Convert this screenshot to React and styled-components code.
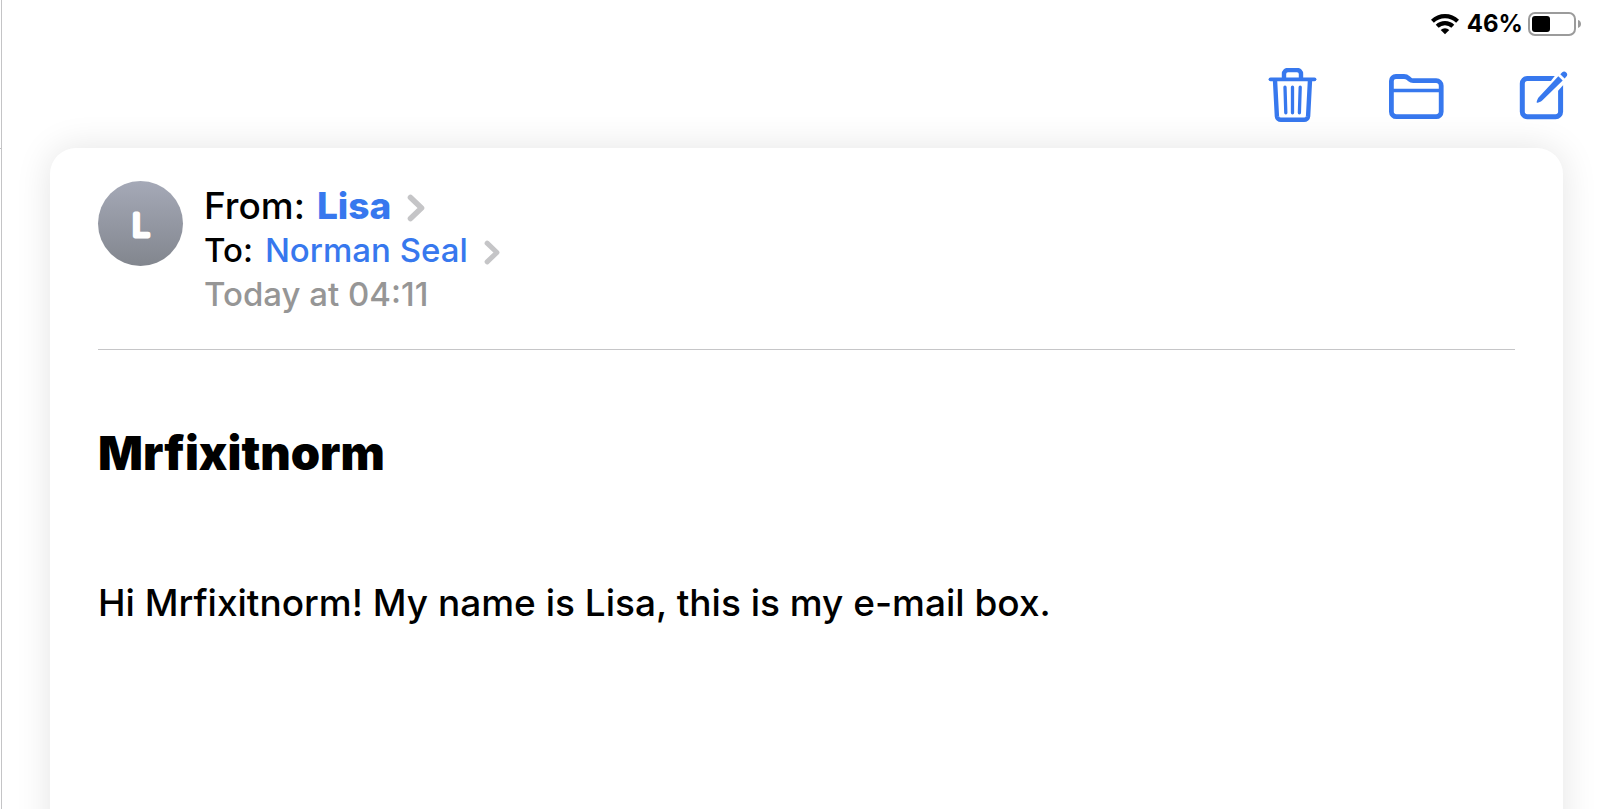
import React from "react";
import styled, { createGlobalStyle } from "styled-components";

const BLUE = "#3778ee";

const GlobalStyle = createGlobalStyle`
  *, *::before, *::after { box-sizing: border-box; }
  body {
    margin: 0;
    background: #fff;
    color: #000;
    font-family: Inter, "Liberation Sans", sans-serif;
  }
  button {
    margin: 0;
    padding: 0;
    border: 0;
    background: none;
    color: inherit;
    font: inherit;
    cursor: pointer;
  }
`;

const Screen = styled.div`
  display: flex;
  min-height: 100vh;
  overflow: hidden;
`;

const SidebarEdge = styled.div`
  flex: none;
  width: 2px;
  border-right: 1px solid #c4c4c6;

  &::before {
    content: "";
    display: block;
    height: 149px;
    border-bottom: 1px solid #c4c4c6;
  }
`;

const Pane = styled.div`
  flex: 1;
  min-width: 0;
  display: flex;
  flex-direction: column;
`;

const StatusBar = styled.div`
  display: flex;
  align-items: center;
  justify-content: flex-end;
  height: 48px;
  padding-right: 29px;
`;

const BatteryLevel = styled.span`
  margin: 0 5px 0 8px;
  font-size: 24px;
  line-height: 28px;
  font-weight: 700;
`;

const Toolbar = styled.div`
  display: flex;
  justify-content: flex-end;
  align-items: center;
  gap: 68px;
  height: 100px;
  padding: 0 42px 4px 0;
`;

const ToolButton = styled.button`
  width: 56px;
  height: 56px;
  color: ${BLUE};

  svg { display: block; }
`;

const Card = styled.article`
  flex: 1;
  margin: 0 48px -60px;
  padding: 33px 48px 108px;
  border-radius: 26px;
  background: #fff;
  box-shadow: 0 0 36px rgba(0, 0, 0, 0.11);
`;

const MessageHeader = styled.header`
  display: flex;
  align-items: flex-start;
  gap: 21px;
  padding-bottom: 33px;
  border-bottom: 1px solid #c6c6c8;
`;

const Avatar = styled.div`
  flex: none;
  width: 85px;
  height: 85px;
  border-radius: 50%;
  background: linear-gradient(#a5a9b7, #82868e);

  svg { display: block; }
  text {
    font-size: 30px;
    font-weight: 300;
    fill: #fff;
    stroke: #fff;
    stroke-width: 5px;
    stroke-linejoin: round;
  }
`;

const Details = styled.div`
  padding-top: 3px;
`;

const DetailLine = styled.div`
  display: flex;
  align-items: center;
  gap: 12px;
  font-size: ${(p) => (p.$large ? 37 : 33)}px;
  line-height: 44px;
  font-weight: 500;
  color: ${(p) => (p.$muted ? "#969696" : "#000")};
`;

const Contact = styled.button`
  display: flex;
  align-items: center;
  gap: 16px;
  color: ${BLUE};
  font-weight: ${(p) => (p.$bold ? 800 : 500)};

  svg { margin-top: 4px; }
`;

const Subject = styled.h1`
  margin: 75px 0 100px;
  font-size: 47px;
  line-height: 56px;
  font-weight: 900;
`;

const Body = styled.p`
  margin: 0;
  font-size: 37px;
  line-height: 44px;
  font-weight: 500;
`;

function Chevron({ height }) {
  return (
    <svg width={(height * 18) / 28} height={height} viewBox="0 0 18 28" fill="none" stroke="#c5c5c7" strokeWidth="5.600" strokeLinecap="round" strokeLinejoin="round" aria-hidden="true">
      <path d="M3.5 3.5 14.5 14 3.5 24.5" />
    </svg>
  );
}

function WifiIcon() {
  return (
    <svg width="28" height="22" viewBox="0 0 28 22" fill="none" stroke="#000" strokeWidth="4.200" aria-label="Wi-Fi">
      <path d="M1.4 8.3a18 18 0 0 1 25.2 0" />
      <path d="M6.2 13.200a11.200 11.200 0 0 1 15.600 0" />
      <path d="M14 21.2 9.7 16.9a6.2 6.2 0 0 1 8.6 0z" fill="#000" stroke="none" />
    </svg>
  );
}

function BatteryIcon() {
  return (
    <svg width="54" height="24" viewBox="0 0 54 24" aria-label="Battery">
      <rect x="1" y="1" width="46" height="22" rx="6" fill="none" stroke="#9b9b9b" strokeWidth="2" />
      <rect x="4" y="4" width="18" height="16" rx="3" />
      <path d="M50 8c2 .6 3 2.200 3 4s-1 3.400-3 4z" fill="#9b9b9b" />
    </svg>
  );
}

function TrashIcon() {
  return (
    <svg width="56" height="56" viewBox="0 0 56 56" fill="none" stroke="currentColor" strokeLinecap="round" strokeLinejoin="round" aria-hidden="true">
      <path d="M5.500 11.300h44" strokeWidth="3.800" />
      <path d="M19 11V6a4 4 0 0 1 4-4h9a4 4 0 0 1 4 4V11" strokeWidth="4.400" strokeLinecap="butt" />
      <path d="M10 12l1.900 36.200a4 4 0 0 0 4 3.600h23.200a4 4 0 0 0 4-3.600L45 12" strokeWidth="4.400" strokeLinecap="butt" />
      <path d="M20 19.200l.8 25.600M27.500 19.200v25.600M35.200 19.200l-.8 25.600" strokeWidth="3.300" />
    </svg>
  );
}

function FolderIcon() {
  return (
    <svg width="56" height="56" viewBox="0 0 56 56" fill="none" stroke="currentColor" strokeWidth="4.800" strokeLinejoin="round" aria-hidden="true">
      <path d="M2.400 13a4.500 4.500 0 0 1 4.500-4.500H15c2 0 3 .5 4.500 1.800l1 .9c1 .9 2 1.500 3.700 1.500H47.200a5 5 0 0 1 5 5V43.700a5 5 0 0 1-5 5H7.400a5 5 0 0 1-5-5z" />
      <path d="M3 22.500h48" strokeWidth="3.400" />
    </svg>
  );
}

function ComposeIcon() {
  return (
    <svg width="56" height="56" viewBox="0 0 56 56" fill="none" stroke="currentColor" strokeWidth="5" aria-hidden="true">
      <path d="M42 10.500H14.300a5 5 0 0 0-5 5V43.700a5 5 0 0 0 5 5H42.600a5 5 0 0 0 5-5V17" />
      <path d="M34.500 17.500 44 5h9v9L43 25z" fill="#fff" stroke="none" />
      <path d="M45.300 8.200l4.400 4.400-20.500 20c-1.600 1.500-3.600 2-4.700 2.200-.7.100-1-.3-.8-1 .3-1.200 1-3.400 2.300-4.700z" fill="currentColor" stroke="none" />
      <path d="M47.300 6.200l1.700-1.600a2.900 2.900 0 0 1 4.200 4.200l-1.600 1.600z" fill="currentColor" stroke="none" />
    </svg>
  );
}

export default function App() {
  return (
    <>
      <GlobalStyle />
      <Screen>
        <SidebarEdge />
        <Pane>
          <StatusBar>
            <WifiIcon />
            <BatteryLevel>46%</BatteryLevel>
            <BatteryIcon />
          </StatusBar>
          <Toolbar role="toolbar">
            <ToolButton type="button" aria-label="Delete"><TrashIcon /></ToolButton>
            <ToolButton type="button" aria-label="Move to folder"><FolderIcon /></ToolButton>
            <ToolButton type="button" aria-label="Compose"><ComposeIcon /></ToolButton>
          </Toolbar>
          <Card>
            <MessageHeader>
              <Avatar>
                <svg width="85" height="85" viewBox="0 0 85 85">
                  <text x="43" y="55" textAnchor="middle">L</text>
                </svg>
              </Avatar>
              <Details>
                <DetailLine $large>
                  <span>From:</span>
                  <Contact type="button" $bold>Lisa <Chevron height={28} /></Contact>
                </DetailLine>
                <DetailLine>
                  <span>To:</span>
                  <Contact type="button">Norman Seal <Chevron height={25} /></Contact>
                </DetailLine>
                <DetailLine as="time" $muted>Today at 04:11</DetailLine>
              </Details>
            </MessageHeader>
            <Subject>Mrfixitnorm</Subject>
            <Body>Hi Mrfixitnorm! My name is Lisa, this is my e-mail box.</Body>
          </Card>
        </Pane>
      </Screen>
    </>
  );
}
